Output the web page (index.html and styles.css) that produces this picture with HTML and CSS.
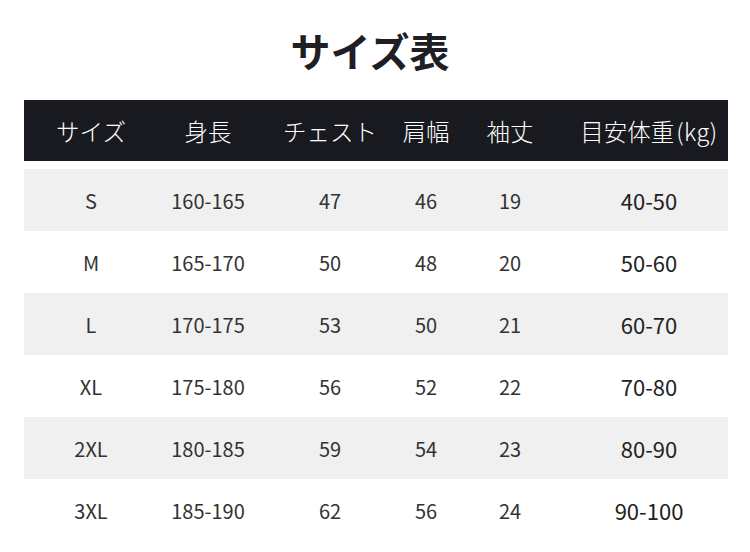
FILE: index.html
```html
<!DOCTYPE html>
<html lang="ja">
<head>
<meta charset="utf-8">
<link rel="stylesheet" href="styles.css">
</head>
<body>
<div class="page">
  <h1 class="title">サイズ表</h1>
  <div class="table">
    <div class="row head">
      <div>サイズ</div><div>身長</div><div>チェスト</div><div>肩幅</div><div>袖丈</div><div>目安体重<span class="kg">(kg)</span></div>
    </div>
    <div class="row gray"><div>S</div><div>160-165</div><div>47</div><div>46</div><div>19</div><div class="w">40-50</div></div>
    <div class="row"><div>M</div><div>165-170</div><div>50</div><div>48</div><div>20</div><div class="w">50-60</div></div>
    <div class="row gray"><div>L</div><div>170-175</div><div>53</div><div>50</div><div>21</div><div class="w">60-70</div></div>
    <div class="row"><div>XL</div><div>175-180</div><div>56</div><div>52</div><div>22</div><div class="w">70-80</div></div>
    <div class="row gray"><div>2XL</div><div>180-185</div><div>59</div><div>54</div><div>23</div><div class="w">80-90</div></div>
    <div class="row"><div>3XL</div><div>185-190</div><div>62</div><div>56</div><div>24</div><div class="w">90-100</div></div>
  </div>
</div>
</body>
</html>
```
FILE: styles.css
```css
html, body {
  margin: 0;
  padding: 0;
  background: #ffffff;
}
body {
  font-family: "Noto Sans CJK JP", "Noto Sans", sans-serif;
  color: #333333;
}
.page {
  width: 750px;
  height: 552px;
  overflow: hidden;
}
.title {
  margin: 0;
  height: 100px;
  padding-right: 10px;
  display: flex;
  align-items: center;
  justify-content: center;
  font-size: 40px;
  font-weight: 700;
  color: #1e1e24;
}
.table {
  margin: 0 22px 0 24px;
}
.row {
  display: grid;
  grid-template-columns: 134px 100px 144px 48px 120px 158px;
  height: 62px;
  align-items: center;
  font-size: 20px;
  color: #333333;
}
.row > div {
  text-align: center;
  white-space: nowrap;
}
.row.head {
  height: 61px;
  background: #191920;
  color: #ffffff;
  font-size: 23.5px;
  font-weight: 300;
  margin-bottom: 8px;
}
.kg {
  letter-spacing: 0.5px;
  margin-left: 2px;
}
.row.gray {
  background: #f0f0f0;
}
.row .w {
  font-size: 22px;
  color: #222222;
}
```
